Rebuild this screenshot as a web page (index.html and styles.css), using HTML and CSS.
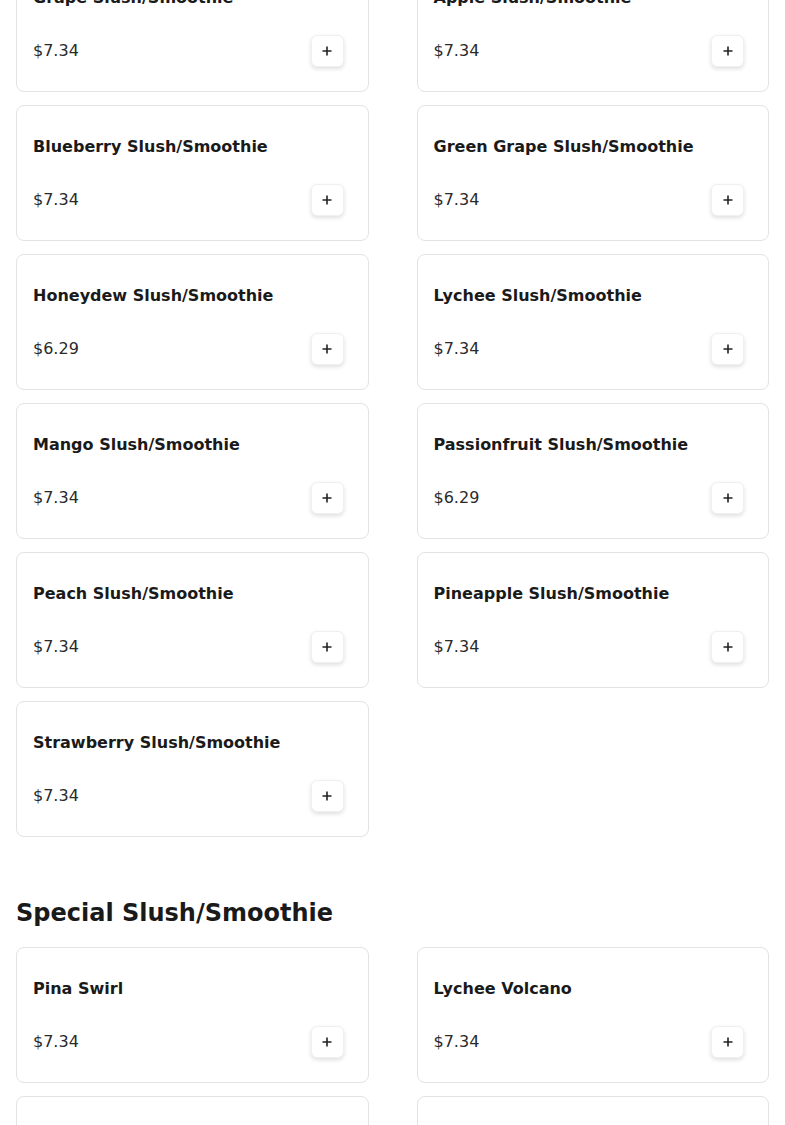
FILE: index.html
```html
<!DOCTYPE html>
<html>
<head>
<meta charset="utf-8">
<link rel="stylesheet" href="styles.css">
</head>
<body>
<main class="menu">
  <section class="section first">
    <div class="grid">
      <div class="card"><div class="title">Grape Slush/Smoothie</div><div class="row"><span class="price">$7.34</span><button class="add"><svg viewBox="0 0 12 12" width="12" height="12"><path d="M6 1.5v9M1.5 6h9" stroke="#222" stroke-width="1.6" fill="none"/></svg></button></div></div>
      <div class="card"><div class="title">Apple Slush/Smoothie</div><div class="row"><span class="price">$7.34</span><button class="add"><svg viewBox="0 0 12 12" width="12" height="12"><path d="M6 1.5v9M1.5 6h9" stroke="#222" stroke-width="1.6" fill="none"/></svg></button></div></div>
      <div class="card"><div class="title">Blueberry Slush/Smoothie</div><div class="row"><span class="price">$7.34</span><button class="add"><svg viewBox="0 0 12 12" width="12" height="12"><path d="M6 1.5v9M1.5 6h9" stroke="#222" stroke-width="1.6" fill="none"/></svg></button></div></div>
      <div class="card"><div class="title">Green Grape Slush/Smoothie</div><div class="row"><span class="price">$7.34</span><button class="add"><svg viewBox="0 0 12 12" width="12" height="12"><path d="M6 1.5v9M1.5 6h9" stroke="#222" stroke-width="1.6" fill="none"/></svg></button></div></div>
      <div class="card"><div class="title">Honeydew Slush/Smoothie</div><div class="row"><span class="price">$6.29</span><button class="add"><svg viewBox="0 0 12 12" width="12" height="12"><path d="M6 1.5v9M1.5 6h9" stroke="#222" stroke-width="1.6" fill="none"/></svg></button></div></div>
      <div class="card"><div class="title">Lychee Slush/Smoothie</div><div class="row"><span class="price">$7.34</span><button class="add"><svg viewBox="0 0 12 12" width="12" height="12"><path d="M6 1.5v9M1.5 6h9" stroke="#222" stroke-width="1.6" fill="none"/></svg></button></div></div>
      <div class="card"><div class="title">Mango Slush/Smoothie</div><div class="row"><span class="price">$7.34</span><button class="add"><svg viewBox="0 0 12 12" width="12" height="12"><path d="M6 1.5v9M1.5 6h9" stroke="#222" stroke-width="1.6" fill="none"/></svg></button></div></div>
      <div class="card"><div class="title">Passionfruit Slush/Smoothie</div><div class="row"><span class="price">$6.29</span><button class="add"><svg viewBox="0 0 12 12" width="12" height="12"><path d="M6 1.5v9M1.5 6h9" stroke="#222" stroke-width="1.6" fill="none"/></svg></button></div></div>
      <div class="card"><div class="title">Peach Slush/Smoothie</div><div class="row"><span class="price">$7.34</span><button class="add"><svg viewBox="0 0 12 12" width="12" height="12"><path d="M6 1.5v9M1.5 6h9" stroke="#222" stroke-width="1.6" fill="none"/></svg></button></div></div>
      <div class="card"><div class="title">Pineapple Slush/Smoothie</div><div class="row"><span class="price">$7.34</span><button class="add"><svg viewBox="0 0 12 12" width="12" height="12"><path d="M6 1.5v9M1.5 6h9" stroke="#222" stroke-width="1.6" fill="none"/></svg></button></div></div>
      <div class="card"><div class="title">Strawberry Slush/Smoothie</div><div class="row"><span class="price">$7.34</span><button class="add"><svg viewBox="0 0 12 12" width="12" height="12"><path d="M6 1.5v9M1.5 6h9" stroke="#222" stroke-width="1.6" fill="none"/></svg></button></div></div>
    </div>
  </section>
  <section class="section">
    <h2 class="heading">Special Slush/Smoothie</h2>
    <div class="grid">
      <div class="card"><div class="title">Pina Swirl</div><div class="row"><span class="price">$7.34</span><button class="add"><svg viewBox="0 0 12 12" width="12" height="12"><path d="M6 1.5v9M1.5 6h9" stroke="#222" stroke-width="1.6" fill="none"/></svg></button></div></div>
      <div class="card"><div class="title">Lychee Volcano</div><div class="row"><span class="price">$7.34</span><button class="add"><svg viewBox="0 0 12 12" width="12" height="12"><path d="M6 1.5v9M1.5 6h9" stroke="#222" stroke-width="1.6" fill="none"/></svg></button></div></div>
      <div class="card"><div class="title">Mango Volcano</div><div class="row"><span class="price">$7.34</span><button class="add"><svg viewBox="0 0 12 12" width="12" height="12"><path d="M6 1.5v9M1.5 6h9" stroke="#222" stroke-width="1.6" fill="none"/></svg></button></div></div>
      <div class="card"><div class="title">Strawberry Volcano</div><div class="row"><span class="price">$7.34</span><button class="add"><svg viewBox="0 0 12 12" width="12" height="12"><path d="M6 1.5v9M1.5 6h9" stroke="#222" stroke-width="1.6" fill="none"/></svg></button></div></div>
    </div>
  </section>
</main>
</body>
</html>
```
FILE: styles.css
```css
html, body {
  margin: 0;
  padding: 0;
  background: #fff;
  overflow: hidden;
}
body {
  font-family: "DejaVu Sans", sans-serif;
  color: #1c1c1c;
}
.menu {
  padding: 0 16px;
  margin-top: -44px;
}
.grid {
  display: grid;
  grid-template-columns: 1fr 1fr;
  column-gap: 48px;
  row-gap: 13px;
}
.card {
  border: 1px solid #e3e3e3;
  border-radius: 8px;
  padding: 29px 24px 24px 16px;
  display: flex;
  flex-direction: column;
  gap: 25px;
  background: #fff;
}
.title {
  font-size: 16px;
  font-weight: bold;
  line-height: 24px;
  color: #1a1a1a;
}
.row {
  display: flex;
  align-items: center;
  justify-content: space-between;
  height: 32px;
}
.price {
  font-size: 16px;
  line-height: 24px;
  color: #2a2a2a;
}
.add {
  width: 33px;
  height: 32px;
  padding: 0;
  border: 1px solid #f0f0f0;
  border-radius: 6px;
  background: #fff;
  box-shadow: 0 2px 4px rgba(0, 0, 0, 0.13);
  display: flex;
  align-items: center;
  justify-content: center;
}
.heading {
  font-size: 24px;
  font-weight: bold;
  line-height: 32px;
  margin: 60px 0 0 0;
  padding: 0 0 18px 0;
  color: #1a1a1a;
}
```
